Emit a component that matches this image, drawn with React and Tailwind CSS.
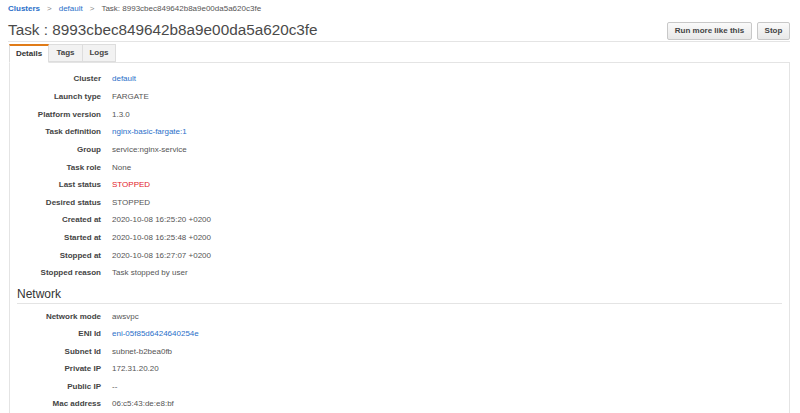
export default function App() {
  const rows = [
    ["Cluster", "default", "link"],
    ["Launch type", "FARGATE"],
    ["Platform version", "1.3.0"],
    ["Task definition", "nginx-basic-fargate:1", "link"],
    ["Group", "service:nginx-service"],
    ["Task role", "None"],
    ["Last status", "STOPPED", "red"],
    ["Desired status", "STOPPED"],
    ["Created at", "2020-10-08 16:25:20 +0200"],
    ["Started at", "2020-10-08 16:25:48 +0200"],
    ["Stopped at", "2020-10-08 16:27:07 +0200"],
    ["Stopped reason", "Task stopped by user"],
  ];
  const net = [
    ["Network mode", "awsvpc"],
    ["ENI Id", "eni-05f85d6424640254e", "link"],
    ["Subnet Id", "subnet-b2bea0fb"],
    ["Private IP", "172.31.20.20"],
    ["Public IP", "--"],
    ["Mac address", "06:c5:43:de:e8:bf"],
  ];
  const valClass = (t) =>
    t === "link" ? "text-[#2a6fc9]" : t === "red" ? "text-[#e3212a]" : "text-[#555]";
  const Row = ({ r, h }) => (
    <div className={`flex items-center ${h}`}>
      <div className="w-[91px] text-right font-bold text-[#444]">{r[0]}</div>
      <div className={`ml-[11px] ${valClass(r[2])}`}>{r[1]}</div>
    </div>
  );
  return (
    <div className="w-[800px] h-[413px] bg-white overflow-hidden font-['Liberation_Sans',Arial,sans-serif] text-[8px] leading-none">
      {/* breadcrumb */}
      <div className="h-[18px] flex items-center px-2 text-[8px]">
        <span className="font-bold text-[#2a6fc9]">Clusters</span>
        <span className="mx-[7px] text-[#888]">&gt;</span>
        <span className="text-[#2a6fc9]">default</span>
        <span className="mx-[7px] text-[#888]">&gt;</span>
        <span className="text-[#555]">Task: 8993cbec849642b8a9e00da5a620c3fe</span>
      </div>
      {/* header */}
      <div className="ml-2 mr-[10px] h-[24px] flex items-end justify-between border-b border-[#e4e4e4] pb-[1px]">
        <div className="text-[15.3px] leading-[20px] text-[#4a4a4a]">Task : 8993cbec849642b8a9e00da5a620c3fe</div>
        <div className="flex gap-[5px]">
          <button className="h-[18px] w-[85px] rounded-[2px] border border-[#c8c8c8] bg-gradient-to-b from-[#fafafa] to-[#e8e8e8] font-bold text-[8px] text-[#444]">Run more like this</button>
          <button className="h-[18px] w-[33px] rounded-[2px] border border-[#c8c8c8] bg-gradient-to-b from-[#fafafa] to-[#e8e8e8] font-bold text-[8px] text-[#444]">Stop</button>
        </div>
      </div>
      {/* tabs */}
      <div className="ml-[9px] mr-[10px] mt-[2px] flex relative z-10 -mb-px">
        <div className="h-[19px] w-[40px] flex items-center justify-center border-t-2 border-t-[#e07b18] border-x border-x-[#ddd] border-b border-b-white bg-white font-bold text-[#333]">Details</div>
        <div className="h-[18px] w-[34px] flex items-center justify-center border border-[#ddd] border-l-0 bg-[#f2f2f2] font-bold text-[#444]">Tags</div>
        <div className="h-[18px] w-[33px] flex items-center justify-center border border-[#ddd] border-l-0 bg-[#f2f2f2] font-bold text-[#444]">Logs</div>
      </div>
      {/* panel */}
      <div className="ml-[9px] mr-[10px] border border-[#e4e4e4] border-b-0 h-[400px]">
        <div className="pt-[7.5px]">
          {rows.map((r) => (
            <Row key={r[0]} r={r} h="h-[17.65px]" />
          ))}
        </div>
        <div className="mx-[7px] mt-[5px] border-b border-[#e4e4e4] pb-[2px] text-[12px] leading-[14px] text-[#333]">Network</div>
        <div className="pt-[4px]">
          {net.map((r) => (
            <Row key={r[0]} r={r} h="h-[17.45px]" />
          ))}
        </div>
      </div>
    </div>
  );
}
